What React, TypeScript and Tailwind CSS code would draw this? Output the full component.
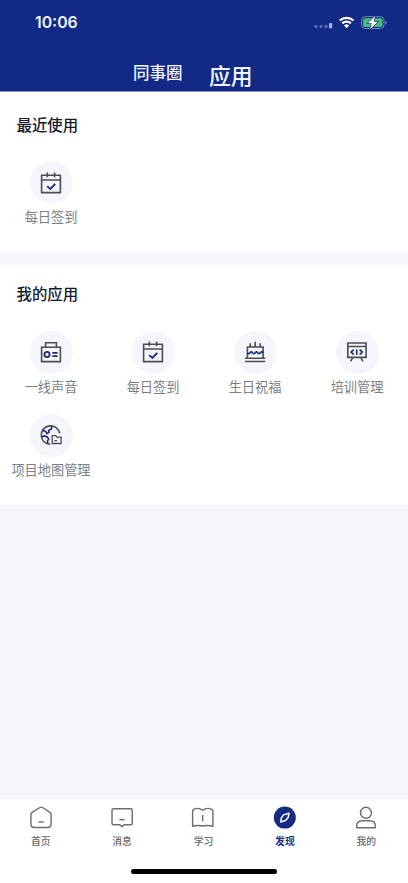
import type { ReactNode } from "react";

const NAVY = "#1a2a78";

function CalendarIcon() {
  return (
    <>
      <path d="M2.6 4.3h18.8v17.3H2.6zM2.6 9h18.8M8.3 1.6v4.6M15.6 1.6v4.6" />
      <path stroke={NAVY} strokeWidth="1.8" d="m8.2 15.2 3.1 2.8 4.9-5" />
    </>
  );
}

function RadioIcon() {
  return (
    <>
      <path d="M2.6 7.3h18.8v14.3H2.6zM6.6 7.3V2.7h10.8v4.6" />
      <g stroke={NAVY} strokeWidth="1.8">
        <circle cx="8" cy="14.5" r="2.6" />
        <path d="M13.3 12.8h5.3M13.3 16.1h5.3" />
      </g>
    </>
  );
}

function CakeIcon() {
  return (
    <>
      <path d="M4.4 18.2V7h15.7v11.2M2 18.3h20.2M2 21.5h20.2M7.2 3.3V7M12.2 1.7V7M17.2 3.3V7" />
      <path stroke={NAVY} d="M4.4 12.8q1.3 1.8 2.6 0t2.6 0 2.6 0 2.6 0 2.6 0 2.7 0" />
    </>
  );
}

function BoardIcon() {
  return (
    <>
      <path d="M2.8 3h18.3v14.4H2.8zM2.8 6.5h18.3M8 17.4l-2.4 4M15.6 17.4l2.4 4" />
      <path stroke={NAVY} d="m8.7 9.6-2.6 2.5 2.6 2.5M14.7 9.6l2.6 2.5-2.6 2.5M11.7 9.5v5.2" />
    </>
  );
}

function GlobeIcon() {
  return (
    <>
      <path d="M20.7 10.3A9.3 9.3 0 1 0 11.3 21.4" />
      <path
        stroke={NAVY}
        d="M3.4 7.3l3.3 1.1 1.1 2.2 2.3-1.5-.5-1.7 2.7-1.3.6-3.1M2.4 13.9l2.9-1 2.9 1 1.5 2.2-1.2 1.6.3 3"
      />
      <path d="M13.2 12.6h3.5l1.2 1.6h4.2v6.3h-8.9zM15.4 17.7H18" strokeWidth="1.3" />
    </>
  );
}

function AppItem({ label, icon }: { label: string; icon: ReactNode }) {
  return (
    <div className="flex h-[83px] flex-col items-center">
      <div className="flex h-[43px] w-[43px] items-center justify-center rounded-full bg-[#f5f6fb]">
        <svg className="h-6 w-6" viewBox="0 0 24 24" fill="none" stroke="#4b4c55" strokeWidth="1.6">
          {icon}
        </svg>
      </div>
      <span className="mt-[3px] text-[13.2px] leading-5 whitespace-nowrap text-[#7b7f86]">{label}</span>
    </div>
  );
}

const apps = [
  { label: "一线声音", icon: <RadioIcon /> },
  { label: "每日签到", icon: <CalendarIcon /> },
  { label: "生日祝福", icon: <CakeIcon /> },
  { label: "培训管理", icon: <BoardIcon /> },
  { label: "项目地图管理", icon: <GlobeIcon /> },
];

const tabs = [
  {
    label: "首页",
    icon: (
      <>
        <path d="M10.9 1.5 3.1 6.3Q1.9 7.1 1.9 8.600v9.400q0 3.500 3.500 3.500h13.200q3.500 0 3.500-3.500V8.600q0-1.500-1.200-2.300l-7.400-4.800q-1.300-.8-2.600 0z" />
        <path d="M9.400 16h5.300" />
      </>
    ),
  },
  {
    label: "消息",
    icon: (
      <>
        <path d="M3.5 2.8h17.3q1.5 0 1.5 1.5v12.9q0 1.5-1.5 1.5h-6.6L12 20.6l-2.200-1.900H3.500q-1.500 0-1.500-1.500V4.300q0-1.500 1.500-1.500z" />
        <path d="M9.4 13.7h5.3" />
      </>
    ),
  },
  {
    label: "学习",
    icon: (
      <>
        <path d="M11.7 4.3Q7.5 1 2.7 3.4 1.600 4 1.600 5.200v15.100q5.500-1.500 10.100-.3 4.600-1.200 10.200.3V5.200q0-1.200-1.100-1.800-4.900-2.400-9.100.9z" />
        <path d="M11.700 9v6.300" />
      </>
    ),
  },
  {
    label: "发现",
    active: true,
    icon: (
      <>
        <circle cx="11.8" cy="11.6" r="11" fill="#152a83" stroke="none" />
        <path stroke="#fff" strokeWidth="1.5" d="M15.900 7.300 10.600 8.900 8.200 12.100 7.800 16 12.900 14.300 15.300 11.100z" />
      </>
    ),
  },
  {
    label: "我的",
    icon: (
      <>
        <circle cx="12" cy="6.8" r="5.5" />
        <path d="M2.7 21.7v-1.500q0-5.500 5.500-5.500h7.700q5.500 0 5.500 5.500v1.500z" />
      </>
    ),
  },
];

function StatusBar() {
  return (
    <div className="flex h-[46px] items-center justify-between pr-5 pl-[35px]">
      <span className="font-['Inter',sans-serif] text-[15.8px] font-semibold text-[#edf3ff]">10:06</span>
      <svg className="h-4 w-[74px]" viewBox="0 0 74 16" fill="none">
        <g fill="#5c6fb8">
          <rect x="0.5" y="10" width="3" height="3" rx="1.2" />
          <rect x="5.5" y="10" width="3" height="3" rx="1.2" />
          <rect x="10.5" y="10" width="3" height="3" rx="1.2" />
        </g>
        <rect x="15" y="8" width="3.2" height="5.2" rx="0.8" fill="#a3b2e6" />
        <g stroke="#fff" strokeWidth="2.2">
          <path d="M25.7 5.5a10.1 10.1 0 0 1 13.8 0" />
          <path d="M28.3 8.4a6.3 6.3 0 0 1 8.6 0" />
        </g>
        <path d="M32.6 13.2 30 10.5a3.700 3.700 0 0 1 5.200 0z" fill="#fff" />
        <rect x="47.5" y="1.7" width="22.5" height="11.8" rx="3.6" stroke="#6b8fb0" />
        <rect x="49" y="3.2" width="19.5" height="8.8" rx="2" fill="#45c078" />
        <path d="M71.3 5.700v3.800q1.500-.5 1.500-1.900t-1.500-1.900z" fill="#6b8fb0" />
        <path
          d="M61 1 53.8 8.3h4l-1.6 6 7.6-7.6h-4z"
          fill="#fff"
          stroke="#152a83"
          strokeWidth="1.2"
          paintOrder="stroke"
        />
      </svg>
    </div>
  );
}

export default function App() {
  return (
    <div className="flex h-[883px] w-[408px] flex-col overflow-hidden bg-[#f5f6fb] font-['Noto_Sans_CJK_SC',sans-serif]">
      <header className="h-[92px] shrink-0 border-b border-[#8795c4] bg-[#122986]">
        <StatusBar />
        <div className="flex items-start pl-[133px] text-[#f0f5ff]">
          <span className="mt-[14px] text-[16.5px] leading-6 font-medium">同事圈</span>
          <span className="mt-[15px] ml-[26.5px] text-[21.8px] leading-7 font-medium">应用</span>
        </div>
      </header>

      {/* Recently used */}
      <section className="h-40 shrink-0 bg-white pt-5">
        <h2 className="pl-[16.5px] text-[15.4px] leading-6 font-medium text-[#17192d]">最近使用</h2>
        <div className="mt-[25px] grid grid-cols-4">
          <AppItem label="每日签到" icon={<CalendarIcon />} />
        </div>
      </section>

      {/* My apps */}
      <section className="mt-[13px] h-[240px] shrink-0 bg-white pt-4">
        <h2 className="pl-[16.5px] text-[15.4px] leading-6 font-medium text-[#17192d]">我的应用</h2>
        <div className="mt-[25.5px] grid grid-cols-4">
          {apps.map((app) => (
            <AppItem key={app.label} label={app.label} icon={app.icon} />
          ))}
        </div>
      </section>

      <nav className="mt-auto h-[84px] shrink-0 bg-white pt-[6.5px]">
        <div className="mr-px grid grid-cols-5">
          {tabs.map((tab) => (
            <div key={tab.label} className="flex flex-col items-center">
              <svg
                className="h-6 w-6"
                viewBox="0 0 24 24"
                fill="none"
                stroke="#6b6c75"
                strokeWidth="1.4"
                strokeLinejoin="round"
              >
                {tab.icon}
              </svg>
              <span
                className={
                  tab.active
                    ? "mt-[3px] text-[9.8px] leading-4 font-bold text-[#1c2c80]"
                    : "mt-[3px] text-[9.8px] leading-4 font-medium text-[#666972]"
                }
              >
                {tab.label}
              </span>
            </div>
          ))}
        </div>
        <div className="mx-auto mt-[20.5px] h-[5px] w-[146px] rounded-full bg-black" />
      </nav>
    </div>
  );
}
